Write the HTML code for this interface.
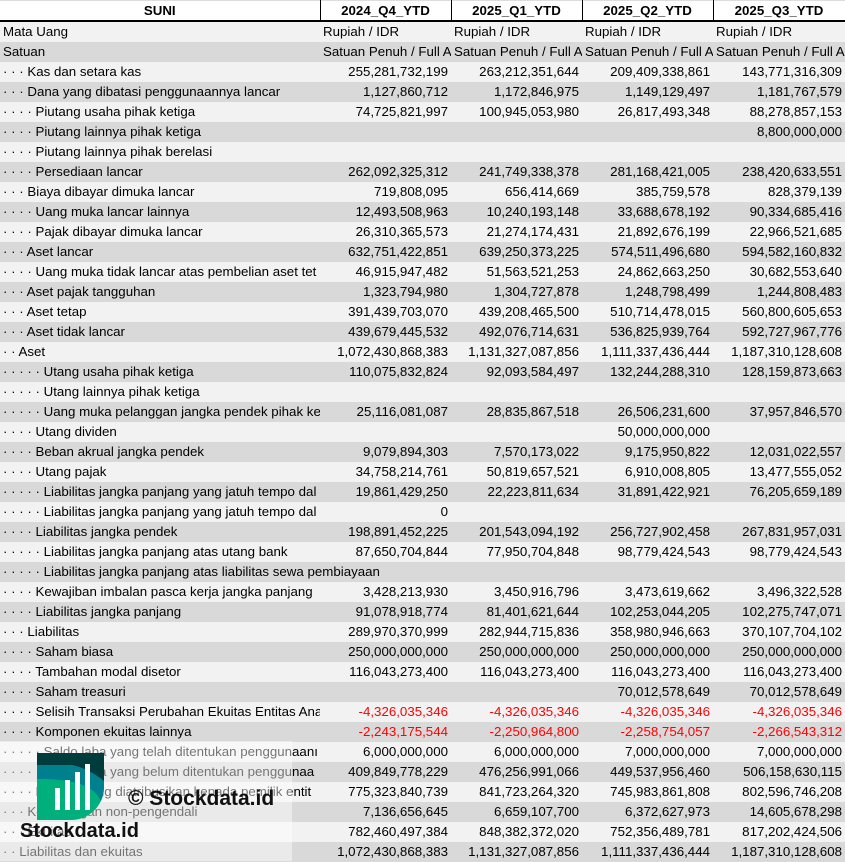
<!DOCTYPE html>
<html><head><meta charset="utf-8">
<style>
body{margin:0;width:845px;height:861px;overflow:hidden;background:#fff;font-family:"Liberation Sans",sans-serif;font-size:13.3px;color:#000;position:relative}
table{border-collapse:collapse;table-layout:fixed;width:845px}
td{height:20px;padding:0 3px;white-space:nowrap;overflow:hidden;line-height:20px;box-sizing:border-box}
td.n{text-align:right}
tr.h td{font-weight:bold;text-align:center;border-right:1px solid #000;border-bottom:2px solid #000;border-top:1px solid #ddd;background:#fff;height:20px;line-height:17px}
tr:nth-child(even) td{background:#f2f2f2}
tr:nth-child(odd):not(.h) td{background:#d9d9d9}
.r{color:#f00}
.ov{overflow:visible}
.wm{position:absolute;left:0;top:741px;width:292px;height:120px;background:rgba(255,255,255,0.45)}
</style></head><body>
<table>
<colgroup><col style="width:320px"><col style="width:131px"><col style="width:131px"><col style="width:131px"><col style="width:132px"></colgroup>
<tr class="h"><td>SUNI</td><td>2024_Q4_YTD</td><td>2025_Q1_YTD</td><td>2025_Q2_YTD</td><td>2025_Q3_YTD</td></tr>
<tr><td>Mata Uang</td><td>Rupiah / IDR</td><td>Rupiah / IDR</td><td>Rupiah / IDR</td><td>Rupiah / IDR</td></tr>
<tr><td>Satuan</td><td style="padding:0 0 0 3px">Satuan Penuh / Full A</td><td style="padding:0 0 0 3px">Satuan Penuh / Full A</td><td style="padding:0 0 0 3px">Satuan Penuh / Full A</td><td style="padding:0 0 0 3px">Satuan Penuh / Full A</td></tr>
<tr><td>· · · Kas dan setara kas</td><td class="n">255,281,732,199</td><td class="n">263,212,351,644</td><td class="n">209,409,338,861</td><td class="n">143,771,316,309</td></tr>
<tr><td>· · · Dana yang dibatasi penggunaannya lancar</td><td class="n">1,127,860,712</td><td class="n">1,172,846,975</td><td class="n">1,149,129,497</td><td class="n">1,181,767,579</td></tr>
<tr><td>· · · · Piutang usaha pihak ketiga</td><td class="n">74,725,821,997</td><td class="n">100,945,053,980</td><td class="n">26,817,493,348</td><td class="n">88,278,857,153</td></tr>
<tr><td>· · · · Piutang lainnya pihak ketiga</td><td></td><td></td><td></td><td class="n">8,800,000,000</td></tr>
<tr><td>· · · · Piutang lainnya pihak berelasi</td><td></td><td></td><td></td><td></td></tr>
<tr><td>· · · · Persediaan lancar</td><td class="n">262,092,325,312</td><td class="n">241,749,338,378</td><td class="n">281,168,421,005</td><td class="n">238,420,633,551</td></tr>
<tr><td>· · · Biaya dibayar dimuka lancar</td><td class="n">719,808,095</td><td class="n">656,414,669</td><td class="n">385,759,578</td><td class="n">828,379,139</td></tr>
<tr><td>· · · · Uang muka lancar lainnya</td><td class="n">12,493,508,963</td><td class="n">10,240,193,148</td><td class="n">33,688,678,192</td><td class="n">90,334,685,416</td></tr>
<tr><td>· · · · Pajak dibayar dimuka lancar</td><td class="n">26,310,365,573</td><td class="n">21,274,174,431</td><td class="n">21,892,676,199</td><td class="n">22,966,521,685</td></tr>
<tr><td>· · · Aset lancar</td><td class="n">632,751,422,851</td><td class="n">639,250,373,225</td><td class="n">574,511,496,680</td><td class="n">594,582,160,832</td></tr>
<tr><td>· · · · Uang muka tidak lancar atas pembelian aset tet</td><td class="n">46,915,947,482</td><td class="n">51,563,521,253</td><td class="n">24,862,663,250</td><td class="n">30,682,553,640</td></tr>
<tr><td>· · · Aset pajak tangguhan</td><td class="n">1,323,794,980</td><td class="n">1,304,727,878</td><td class="n">1,248,798,499</td><td class="n">1,244,808,483</td></tr>
<tr><td>· · · Aset tetap</td><td class="n">391,439,703,070</td><td class="n">439,208,465,500</td><td class="n">510,714,478,015</td><td class="n">560,800,605,653</td></tr>
<tr><td>· · · Aset tidak lancar</td><td class="n">439,679,445,532</td><td class="n">492,076,714,631</td><td class="n">536,825,939,764</td><td class="n">592,727,967,776</td></tr>
<tr><td>· · Aset</td><td class="n">1,072,430,868,383</td><td class="n">1,131,327,087,856</td><td class="n">1,111,337,436,444</td><td class="n">1,187,310,128,608</td></tr>
<tr><td>· · · · · Utang usaha pihak ketiga</td><td class="n">110,075,832,824</td><td class="n">92,093,584,497</td><td class="n">132,244,288,310</td><td class="n">128,159,873,663</td></tr>
<tr><td>· · · · · Utang lainnya pihak ketiga</td><td></td><td></td><td></td><td></td></tr>
<tr><td>· · · · · Uang muka pelanggan jangka pendek pihak ke</td><td class="n">25,116,081,087</td><td class="n">28,835,867,518</td><td class="n">26,506,231,600</td><td class="n">37,957,846,570</td></tr>
<tr><td>· · · · Utang dividen</td><td></td><td></td><td class="n">50,000,000,000</td><td></td></tr>
<tr><td>· · · · Beban akrual jangka pendek</td><td class="n">9,079,894,303</td><td class="n">7,570,173,022</td><td class="n">9,175,950,822</td><td class="n">12,031,022,557</td></tr>
<tr><td>· · · · Utang pajak</td><td class="n">34,758,214,761</td><td class="n">50,819,657,521</td><td class="n">6,910,008,805</td><td class="n">13,477,555,052</td></tr>
<tr><td>· · · · · Liabilitas jangka panjang yang jatuh tempo dal</td><td class="n">19,861,429,250</td><td class="n">22,223,811,634</td><td class="n">31,891,422,921</td><td class="n">76,205,659,189</td></tr>
<tr><td>· · · · · Liabilitas jangka panjang yang jatuh tempo dal</td><td class="n">0</td><td></td><td></td><td></td></tr>
<tr><td>· · · · Liabilitas jangka pendek</td><td class="n">198,891,452,225</td><td class="n">201,543,094,192</td><td class="n">256,727,902,458</td><td class="n">267,831,957,031</td></tr>
<tr><td>· · · · · Liabilitas jangka panjang atas utang bank</td><td class="n">87,650,704,844</td><td class="n">77,950,704,848</td><td class="n">98,779,424,543</td><td class="n">98,779,424,543</td></tr>
<tr><td class="ov">· · · · · Liabilitas jangka panjang atas liabilitas sewa pembiayaan</td><td></td><td></td><td></td><td></td></tr>
<tr><td>· · · · Kewajiban imbalan pasca kerja jangka panjang</td><td class="n">3,428,213,930</td><td class="n">3,450,916,796</td><td class="n">3,473,619,662</td><td class="n">3,496,322,528</td></tr>
<tr><td>· · · · Liabilitas jangka panjang</td><td class="n">91,078,918,774</td><td class="n">81,401,621,644</td><td class="n">102,253,044,205</td><td class="n">102,275,747,071</td></tr>
<tr><td>· · · Liabilitas</td><td class="n">289,970,370,999</td><td class="n">282,944,715,836</td><td class="n">358,980,946,663</td><td class="n">370,107,704,102</td></tr>
<tr><td>· · · · Saham biasa</td><td class="n">250,000,000,000</td><td class="n">250,000,000,000</td><td class="n">250,000,000,000</td><td class="n">250,000,000,000</td></tr>
<tr><td>· · · · Tambahan modal disetor</td><td class="n">116,043,273,400</td><td class="n">116,043,273,400</td><td class="n">116,043,273,400</td><td class="n">116,043,273,400</td></tr>
<tr><td>· · · · Saham treasuri</td><td></td><td></td><td class="n">70,012,578,649</td><td class="n">70,012,578,649</td></tr>
<tr><td>· · · · Selisih Transaksi Perubahan Ekuitas Entitas Ana</td><td class="n r">-4,326,035,346</td><td class="n r">-4,326,035,346</td><td class="n r">-4,326,035,346</td><td class="n r">-4,326,035,346</td></tr>
<tr><td>· · · · Komponen ekuitas lainnya</td><td class="n r">-2,243,175,544</td><td class="n r">-2,250,964,800</td><td class="n r">-2,258,754,057</td><td class="n r">-2,266,543,312</td></tr>
<tr><td>· · · · · Saldo laba yang telah ditentukan penggunaanı</td><td class="n">6,000,000,000</td><td class="n">6,000,000,000</td><td class="n">7,000,000,000</td><td class="n">7,000,000,000</td></tr>
<tr><td>· · · · · Saldo laba yang belum ditentukan penggunaa</td><td class="n">409,849,778,229</td><td class="n">476,256,991,066</td><td class="n">449,537,956,460</td><td class="n">506,158,630,115</td></tr>
<tr><td>· · · · Ekuitas yang diatribusikan kepada pemilik entit</td><td class="n">775,323,840,739</td><td class="n">841,723,264,320</td><td class="n">745,983,861,808</td><td class="n">802,596,746,208</td></tr>
<tr><td>· · · Kepentingan non-pengendali</td><td class="n">7,136,656,645</td><td class="n">6,659,107,700</td><td class="n">6,372,627,973</td><td class="n">14,605,678,298</td></tr>
<tr><td>· · · Ekuitas</td><td class="n">782,460,497,384</td><td class="n">848,382,372,020</td><td class="n">752,356,489,781</td><td class="n">817,202,424,506</td></tr>
<tr><td>· · Liabilitas dan ekuitas</td><td class="n">1,072,430,868,383</td><td class="n">1,131,327,087,856</td><td class="n">1,111,337,436,444</td><td class="n">1,187,310,128,608</td></tr>
</table>
<div class="wm"></div>
<svg style="position:absolute;left:37px;top:753px" width="67" height="67" viewBox="0 0 67 67">
<defs><clipPath id="c"><path d="M0 0H67V34A33 33 0 0 1 34 67H0Z"/></clipPath></defs>
<g clip-path="url(#c)">
<rect width="67" height="67" fill="#00b07c"/>
<path d="M0 0H67V67C67 40 55 26 0 26Z" fill="#00808f"/>
<path d="M0 0H67V28C50 14 30 8 0 8Z" fill="#003c3c"/>
<rect x="0" y="0" width="67" height="12" fill="#003c3c"/>
</g>
<rect x="18" y="35" width="5" height="22" fill="#fff"/>
<rect x="28" y="27" width="5" height="30" fill="#fff"/>
<rect x="38" y="19" width="5" height="38" fill="#fff"/>
<rect x="48" y="11" width="5" height="46" fill="#fff"/>
</svg>
<div style="position:absolute;left:128px;top:787px;font-size:21px;font-weight:bold;color:#111">© Stockdata.id</div>
<div style="position:absolute;left:20px;top:820px;font-size:20px;font-weight:bold;color:#111">Stockdata.id</div>
</body></html>
